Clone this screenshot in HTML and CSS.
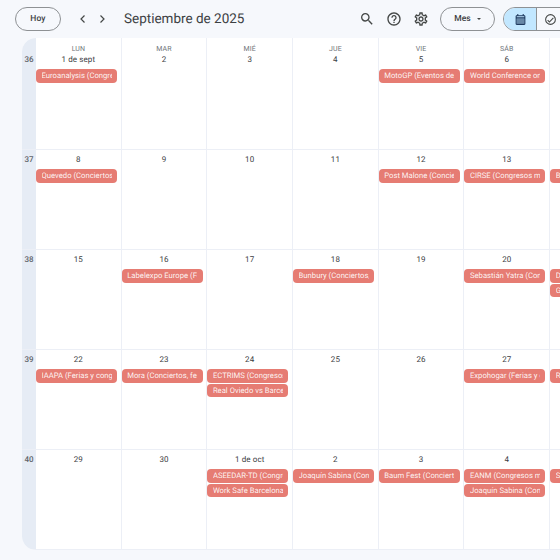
FILE: index.html
```html
<!DOCTYPE html>
<html lang="es">
<head>
    <meta charset="UTF-8">
    <meta name="viewport" content="width=device-width, initial-scale=1.0">
    <title>Septiembre de 2025</title>
    <link rel="stylesheet" href="styles.css">
</head>
<body>
    <header class="topbar">
        <button class="pill today-btn">Hoy</button>
        <div class="nav-arrows">
            <svg class="chevron" viewBox="0 0 12 12"><path d="M7.5 2.5 4 6l3.5 3.5"/></svg>
            <svg class="chevron" viewBox="0 0 12 12"><path d="M4.5 2.5 8 6 4.5 9.5"/></svg>
        </div>
        <h1 class="title">Septiembre de 2025</h1>
        <div class="tools">
            <svg class="tool-icon" viewBox="0 0 24 24"><path d="M15.5 14h-.79l-.28-.27A6.471 6.471 0 0 0 16 9.5 6.5 6.5 0 1 0 9.5 16c1.61 0 3.09-.59 4.23-1.57l.27.28v.79l5 4.99L20.49 19l-4.99-5zm-6 0C7.01 14 5 11.99 5 9.5S7.01 5 9.5 5 14 7.01 14 9.5 11.99 14 9.5 14z"/></svg>
            <svg class="tool-icon" viewBox="0 0 24 24"><path d="M11 18h2v-2h-2v2zm1-16C6.48 2 2 6.48 2 12s4.48 10 10 10 10-4.48 10-10S17.52 2 12 2zm0 18c-4.41 0-8-3.59-8-8s3.59-8 8-8 8 3.59 8 8-3.59 8-8 8zm0-14c-2.21 0-4 1.79-4 4h2c0-1.1.9-2 2-2s2 .9 2 2c0 2-3 1.75-3 5h2c0-2.25 3-2.5 3-5 0-2.21-1.79-4-4-4z"/></svg>
            <svg class="tool-icon" viewBox="0 0 24 24"><path d="M19.43 12.98c.04-.32.07-.64.07-.98 0-.34-.03-.66-.07-.98l2.11-1.65c.19-.15.24-.42.12-.64l-2-3.46c-.09-.16-.26-.25-.44-.25-.06 0-.12.01-.17.03l-2.49 1c-.52-.4-1.08-.73-1.69-.98l-.38-2.65C14.46 2.18 14.25 2 14 2h-4c-.25 0-.46.18-.49.42l-.38 2.65c-.61.25-1.17.59-1.69.98l-2.49-1c-.06-.02-.12-.03-.18-.03-.17 0-.34.09-.43.25l-2 3.46c-.13.22-.07.49.12.64l2.11 1.65c-.04.32-.07.65-.07.98 0 .33.03.66.07.98l-2.11 1.65c-.19.15-.24.42-.12.64l2 3.46c.09.16.26.25.44.25.06 0 .12-.01.17-.03l2.49-1c.52.4 1.08.73 1.69.98l.38 2.65c.03.24.24.42.49.42h4c.25 0 .46-.18.49-.42l.38-2.65c.61-.25 1.17-.59 1.69-.98l2.49 1c.06.02.12.03.18.03.17 0 .34-.09.43-.25l2-3.46c.12-.22.07-.49-.12-.64l-2.11-1.65zm-1.98-1.71c.04.31.05.52.05.73 0 .21-.02.43-.05.73l-.14 1.13.89.7 1.08.84-.7 1.21-1.27-.51-1.04-.42-.9.68c-.43.32-.84.56-1.25.73l-1.06.43-.16 1.13-.2 1.35h-1.4l-.19-1.35-.16-1.13-1.06-.43c-.43-.18-.83-.41-1.23-.71l-.91-.7-1.06.43-1.27.51-.7-1.21 1.08-.84.89-.7-.14-1.13c-.03-.31-.05-.54-.05-.74s.02-.43.05-.73l.14-1.13-.89-.7-1.08-.84.7-1.21 1.27.51 1.04.42.9-.68c.43-.32.84-.56 1.25-.73l1.06-.43.16-1.13.2-1.35h1.39l.19 1.35.16 1.13 1.06.43c.43.18.83.41 1.23.71l.91.7 1.06-.43 1.27-.51.7 1.21-1.07.85-.89.7.14 1.13zM12 8c-2.21 0-4 1.79-4 4s1.79 4 4 4 4-1.79 4-4-1.79-4-4-4zm0 6c-1.1 0-2-.9-2-2s.9-2 2-2 2 .9 2 2-.9 2-2 2z"/></svg>
        </div>
        <button class="pill view-btn">Mes <span class="caret"></span></button>
        <div class="switcher">
            <span class="switch-seg active">
                <svg class="seg-icon" viewBox="0 0 24 24"><path d="M19 4h-1V2h-2v2H8V2H6v2H5c-1.1 0-2 .9-2 2v14c0 1.1.9 2 2 2h14c1.1 0 2-.9 2-2V6c0-1.1-.9-2-2-2zm0 16H5V10h14v10zM5 8V6h14v2H5z"/><rect x="5" y="10" width="14" height="10" opacity=".55"/></svg>
            </span>
            <span class="switch-seg tasks">
                <svg class="seg-icon" viewBox="0 0 24 24"><path d="M12 2a10 10 0 1 0 0 20 10 10 0 0 0 0-20zm0 18a8 8 0 1 1 0-16 8 8 0 0 1 0 16zm4.6-11.6L10 15l-2.6-2.6L6 13.8l4 4 8-8z"/></svg>
            </span>
        </div>
    </header>

    <main class="month">
        <section class="week first-week">
            <div class="week-num">36</div>
            <div class="day"><span class="dow">LUN</span><span class="date">1 de sept</span><a class="chip"><span>Euroanalysis (Congresos médicos)</span></a></div>
            <div class="day"><span class="dow">MAR</span><span class="date">2</span></div>
            <div class="day"><span class="dow">MIÉ</span><span class="date">3</span></div>
            <div class="day"><span class="dow">JUE</span><span class="date">4</span></div>
            <div class="day"><span class="dow">VIE</span><span class="date">5</span><a class="chip"><span>MotoGP (Eventos deportivos)</span></a></div>
            <div class="day"><span class="dow">SÁB</span><span class="date">6</span><a class="chip"><span>World Conference on Lung</span></a></div>
            <div class="day"><span class="dow">DOM</span><span class="date">7</span></div>
        </section>
        <section class="week">
            <div class="week-num">37</div>
            <div class="day"><span class="date">8</span><a class="chip"><span>Quevedo (Conciertos, festivales)</span></a></div>
            <div class="day"><span class="date">9</span></div>
            <div class="day"><span class="date">10</span></div>
            <div class="day"><span class="date">11</span></div>
            <div class="day"><span class="date">12</span><a class="chip"><span>Post Malone (Conciertos)</span></a></div>
            <div class="day"><span class="date">13</span><a class="chip"><span>CIRSE (Congresos médicos)</span></a></div>
            <div class="day"><span class="date">14</span><a class="chip"><span>Bad Gyal (Conciertos)</span></a></div>
        </section>
        <section class="week">
            <div class="week-num">38</div>
            <div class="day"><span class="date">15</span></div>
            <div class="day"><span class="date">16</span><a class="chip"><span>Labelexpo Europe (Ferias)</span></a></div>
            <div class="day"><span class="date">17</span></div>
            <div class="day"><span class="date">18</span><a class="chip"><span>Bunbury (Conciertos, festivales)</span></a></div>
            <div class="day"><span class="date">19</span></div>
            <div class="day"><span class="date">20</span><a class="chip"><span>Sebastián Yatra (Conciertos)</span></a></div>
            <div class="day"><span class="date">21</span><a class="chip"><span>Dani Martín (Conciertos)</span></a><a class="chip"><span>Girona vs Levante</span></a></div>
        </section>
        <section class="week">
            <div class="week-num">39</div>
            <div class="day"><span class="date">22</span><a class="chip"><span>IAAPA (Ferias y congresos)</span></a></div>
            <div class="day"><span class="date">23</span><a class="chip"><span>Mora (Conciertos, festivales)</span></a></div>
            <div class="day"><span class="date">24</span><a class="chip"><span>ECTRIMS (Congresos médicos)</span></a><a class="chip"><span>Real Oviedo vs Barcelona</span></a></div>
            <div class="day"><span class="date">25</span></div>
            <div class="day"><span class="date">26</span></div>
            <div class="day"><span class="date">27</span><a class="chip"><span>Expohogar (Ferias y congresos)</span></a></div>
            <div class="day"><span class="date">28</span><a class="chip"><span>Rels B (Conciertos)</span></a></div>
        </section>
        <section class="week">
            <div class="week-num">40</div>
            <div class="day"><span class="date">29</span></div>
            <div class="day"><span class="date">30</span></div>
            <div class="day"><span class="date">1 de oct</span><a class="chip"><span>ASEEDAR-TD (Congresos)</span></a><a class="chip"><span>Work Safe Barcelona</span></a></div>
            <div class="day"><span class="date">2</span><a class="chip"><span>Joaquín Sabina (Conciertos)</span></a></div>
            <div class="day"><span class="date">3</span><a class="chip"><span>Baum Fest (Conciertos)</span></a></div>
            <div class="day"><span class="date">4</span><a class="chip"><span>EANM (Congresos médicos)</span></a><a class="chip"><span>Joaquín Sabina (Conciertos)</span></a></div>
            <div class="day"><span class="date">5</span><a class="chip"><span>Sabor a Ti (Conciertos)</span></a></div>
        </section>
    </main>
</body>
</html>
```

FILE: styles.css
```css
html, body {
    height: 100%;
    overflow: hidden;
}
body {
    margin: 0;
    background: #f6f8fc;
    font-family: Roboto, "Liberation Sans", sans-serif;
    color: #3c4043;
    text-rendering: geometricPrecision;
}
.topbar {
    display: flex;
    align-items: center;
    height: 38px;
    padding-left: 15px;
    width: 600px;
    box-sizing: border-box;
}
.pill {
    height: 24px;
    box-sizing: border-box;
    background: transparent;
    border: 1px solid #8e9194;
    border-radius: 12px;
    font-family: inherit;
    font-size: 8.5px;
    font-weight: 500;
    letter-spacing: .1px;
    color: #3c4043;
    padding: 0;
    flex: none;
    text-rendering: geometricPrecision;
}
.today-btn {
    width: 46px;
}
.nav-arrows {
    display: flex;
    gap: 7px;
    margin-left: 16px;
}
.chevron {
    width: 12px;
    height: 12px;
    fill: none;
    stroke: #444746;
    stroke-width: 1.2;
}
.title {
    margin: 0 0 0 16px;
    font-size: 13.5px;
    font-weight: 400;
    color: #3c4043;
    width: 235px;
    flex: none;
    white-space: nowrap;
}
.tools {
    display: flex;
    gap: 11px;
    width: 81px;
    flex: none;
}
.tool-icon {
    width: 16px;
    height: 16px;
    fill: #444746;
    flex: none;
}
.view-btn {
    width: 55px;
    display: flex;
    align-items: center;
    justify-content: center;
    gap: 6px;
}
.caret {
    width: 0;
    height: 0;
    border-left: 2.5px solid transparent;
    border-right: 2.5px solid transparent;
    border-top: 2.5px solid #444746;
}
.switcher {
    display: flex;
    height: 24px;
    box-sizing: border-box;
    margin-left: 8px;
    border: 1px solid #8e9194;
    border-radius: 12px;
    overflow: hidden;
    flex: none;
}
.switch-seg {
    width: 32px;
    display: flex;
    align-items: center;
    justify-content: center;
}
.switch-seg.active {
    background: #c2e7ff;
    border-right: 1px solid #8e9194;
}
.switch-seg.tasks {
    justify-content: flex-start;
    padding-left: 7px;
}
.seg-icon {
    width: 13px;
    height: 13px;
    fill: #444746;
}
.switch-seg.active .seg-icon {
    fill: #1f3a5f;
}

.month {
    margin-left: 22px;
    width: 614px;
    height: 512px;
    background: #fff;
    border-radius: 14px 0 0 14px;
    overflow: hidden;
    display: flex;
    flex-direction: column;
}
.week {
    display: grid;
    grid-template-columns: 14px repeat(7, 85.7px);
    height: 100px;
    flex: none;
    box-sizing: border-box;
    border-bottom: 1px solid #eceff6;
}
.first-week {
    height: 112px;
}
.week-num {
    background: #e6ecf5;
    font-size: 8px;
    font-weight: 500;
    color: #5f6368;
    text-align: center;
    padding-top: 5px;
    line-height: 10px;
}
.first-week .week-num {
    padding-top: 17px;
}
.day {
    box-sizing: border-box;
    border-right: 1px solid #eceff6;
    display: flex;
    flex-direction: column;
    min-width: 0;
    padding-top: 5px;
}
.first-week .day {
    padding-top: 6px;
}
.dow {
    font-size: 7px;
    color: #70757a;
    text-align: center;
    line-height: 11px;
    letter-spacing: .1px;
}
.date {
    font-size: 8px;
    color: #3c4043;
    text-align: center;
    line-height: 10px;
    letter-spacing: .1px;
    margin-bottom: 4px;
}
.chip {
    display: block;
    box-sizing: border-box;
    width: 81px;
    height: 13.6px;
    margin-bottom: 1px;
    padding: 0 5.5px;
    background: #e67c73;
    border-radius: 4px;
    color: rgba(255,255,255,.92);
    font-size: 7.7px;
    line-height: 13.6px;
}
.chip span {
    display: block;
    overflow: hidden;
    white-space: nowrap;
}
```
